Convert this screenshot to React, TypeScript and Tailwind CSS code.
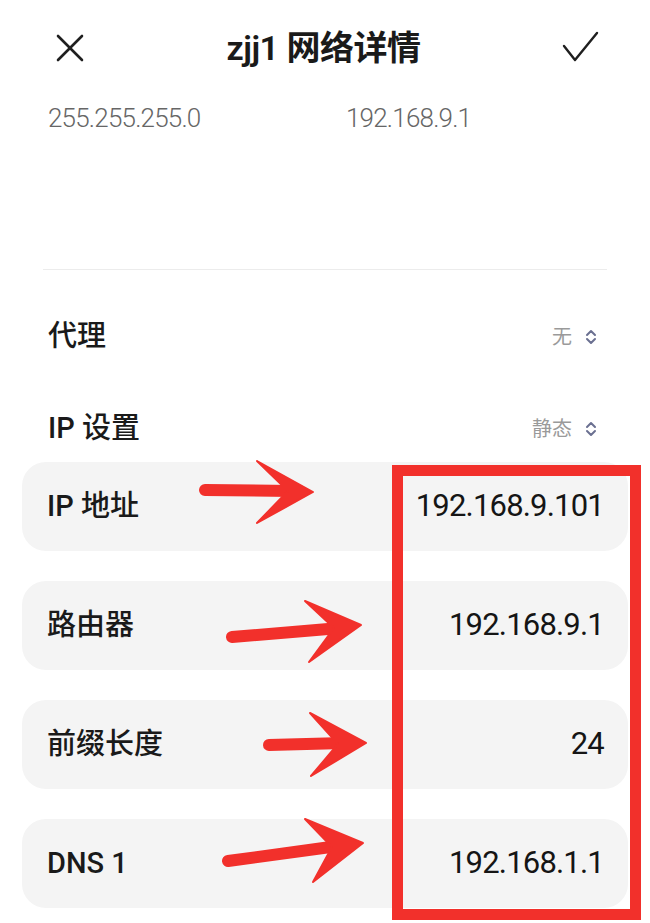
import { Fragment } from "react";

interface Field {
	label: string;
	value: string;
}

const fields: Field[] = [
	{ label: "IP 地址", value: "192.168.9.101" },
	{ label: "路由器", value: "192.168.9.1" },
	{ label: "前缀长度", value: "24" },
	{ label: "DNS 1", value: "192.168.1.1" },
];

// hand-drawn style arrows pointing at the values
const arrows = [
	{ shaft: "M205 490 L292 491", head: "313,492 257,461 288,491 257,523" },
	{ shaft: "M232 637 L340 628", head: "361,625 305,601 334,628 309,662" },
	{ shaft: "M269 745 L344 743", head: "366,743 310,713 338,744 311,776" },
	{ shaft: "M228 861 L338 846", head: "363,843 305,819 332,847 313,882" },
];

const UpDown = () => (
	<svg width="14" height="16" viewBox="0 0 14 16" fill="none" stroke="#6b7091" strokeWidth="2" strokeLinecap="round" strokeLinejoin="round">
		<path d="M3 6 L7 2 L11 6" />
		<path d="M3 10 L7 14 L11 10" />
	</svg>
);

const App = () => {
	return (
		<div
			className="relative h-[923px] w-[650px] overflow-hidden bg-white text-[#1a1a1a]"
			style={{ fontFamily: 'Roboto, "Noto Sans CJK SC", sans-serif' }}
		>
			{/* top bar */}
			<div className="flex h-[96px] items-center justify-between pl-[55px] pr-[50px]">
				<svg width="30" height="30" viewBox="0 0 30 30" fill="none" stroke="#1f1f1f" strokeWidth="2.6" strokeLinecap="round">
					<path d="M3 3 L27 27" />
					<path d="M27 3 L3 27" />
				</svg>
				<span className="text-[34px] font-semibold tracking-[-0.5px]">zjj1 网络详情</span>
				<svg width="38" height="34" viewBox="0 0 38 34" fill="none" stroke="#1f1f1f" strokeWidth="2.4" strokeLinecap="round" strokeLinejoin="round">
					<path d="M2 15 L13 29 L35 2" />
				</svg>
			</div>

			{/* mask / gateway summary */}
			<div className="flex h-[44px] items-center pl-[48px] text-[26px] font-light tracking-[-0.8px] text-[#666]">
				<span className="w-[298px]">255.255.255.0</span>
				<span>192.168.9.1</span>
			</div>

			<div className="mx-[43px] mt-[129px] h-px bg-[#ececec]" />

			<div className="mt-[52px] flex h-[30px] items-center justify-between pl-[48px] pr-[52px]">
				<span className="text-[29px] font-medium">代理</span>
				<span className="flex items-center gap-[12px] text-[20px] text-[#9a9a9a]">
					无
					<UpDown />
				</span>
			</div>

			<div className="mt-[62px] flex h-[30px] items-center justify-between pl-[48px] pr-[52px]">
				<span className="text-[29px] font-medium">IP 设置</span>
				<span className="flex items-center gap-[12px] text-[20px] text-[#9a9a9a]">
					静态
					<UpDown />
				</span>
			</div>

			{/* static ip fields */}
			<div className="mx-[22px] mt-[18px] flex flex-col gap-[30px]">
				{fields.map(f => (
					<Fragment key={f.label}>
						<div className="flex h-[89px] items-center justify-between rounded-[24px] bg-[#f4f4f4] pl-[25px] pr-[24px]">
							<span className="text-[29px] font-medium">{f.label}</span>
							<span className="text-[31px] tracking-[-0.8px] text-[#151515]">{f.value}</span>
						</div>
					</Fragment>
				))}
			</div>

			{/* annotations */}
			<div className="absolute left-[392px] top-[465px] h-[455px] w-[249px] border-[11px] border-[#f2302b]" />
			<svg className="absolute inset-0" width="650" height="923" viewBox="0 0 650 923">
				{arrows.map((a, i) => (
					<g key={i} fill="#f2302b" stroke="#f2302b">
						<path d={a.shaft} strokeWidth="12" strokeLinecap="round" fill="none" />
						<polygon points={a.head} strokeWidth="2" strokeLinejoin="round" />
					</g>
				))}
			</svg>
		</div>
	);
};

export default App;
